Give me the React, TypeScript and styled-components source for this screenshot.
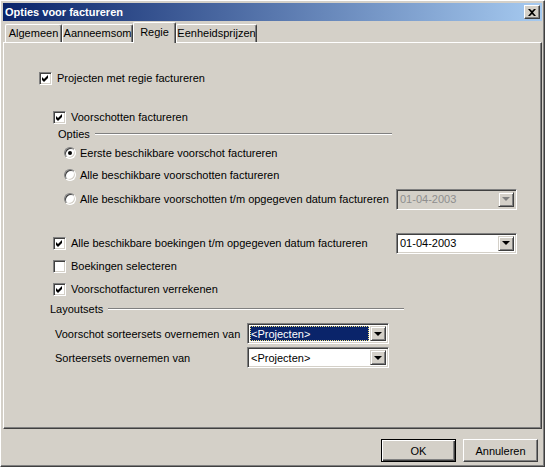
import styled, { createGlobalStyle } from 'styled-components';

const FACE = '#d4d0c8';
const SHADOW = '#808080';
const DARK = '#404040';

const GlobalStyle = createGlobalStyle`
  html, body {
    margin: 0;
    padding: 0;
    background: ${FACE};
  }
  body {
    font-family: Tahoma, "Liberation Sans", Arial, sans-serif;
    font-size: 11px;
    color: #000;
  }
`;

const Dialog = styled.div`
  box-sizing: border-box;
  width: 545px;
  height: 467px;
  display: flex;
  flex-direction: column;
  padding: 2px;
  background: ${FACE};
  border-left: 1px solid #fff;
  border-top: 1px solid #fff;
  border-right: 1px solid ${DARK};
  border-bottom: 1px solid ${DARK};
  box-shadow: inset -1px -1px ${SHADOW};
`;

const TitleBar = styled.div`
  height: 18px;
  flex: none;
  display: flex;
  align-items: center;
  justify-content: space-between;
  padding: 0 2px 0 2px;
  background: linear-gradient(to right, #0a246a, #a6caf0);
`;

const Title = styled.span`
  color: #fff;
  font-weight: bold;
  font-size: 11px;
  white-space: nowrap;
`;

const CloseButton = styled.div`
  box-sizing: border-box;
  width: 16px;
  height: 14px;
  display: flex;
  align-items: center;
  justify-content: center;
  background: ${FACE};
  border-left: 1px solid #fff;
  border-top: 1px solid #fff;
  border-right: 1px solid ${DARK};
  border-bottom: 1px solid ${DARK};
  box-shadow: inset -1px -1px ${SHADOW};
`;

const TabStrip = styled.div`
  height: 21px;
  flex: none;
  display: flex;
  align-items: flex-end;
  padding-left: 2px;
`;

const Tab = styled.div<{ $width: number; $active?: boolean }>`
  position: relative;
  z-index: ${(p) => (p.$active ? 2 : 1)};
  box-sizing: border-box;
  width: ${(p) => p.$width}px;
  height: ${(p) => (p.$active ? 21 : 18)}px;
  margin-bottom: ${(p) => (p.$active ? -1 : 0)}px;
  padding-top: ${(p) => (p.$active ? 3 : 2)}px;
  text-align: center;
  white-space: nowrap;
  background: ${FACE};
  border-left: 1px solid #fff;
  border-top: 1px solid #fff;
  border-right: 1px solid ${DARK};
  border-radius: 2px 2px 0 0;
  box-shadow: inset -1px 0 ${SHADOW};
`;

const Panel = styled.div`
  flex: 1;
  display: flex;
  flex-direction: column;
  padding-top: 25px;
  border-left: 1px solid #fff;
  border-top: 1px solid #fff;
  border-right: 1px solid ${DARK};
  border-bottom: 1px solid ${DARK};
  box-shadow: inset -1px -1px ${SHADOW};
`;

const Row = styled.div<{ $indent: number; $h?: number; $mt?: number }>`
  display: flex;
  align-items: center;
  height: ${(p) => p.$h ?? 20}px;
  margin-top: ${(p) => p.$mt ?? 0}px;
  padding-left: ${(p) => p.$indent}px;
  white-space: nowrap;
`;

const Option = styled.label<{ $width?: number; $gap?: number }>`
  display: flex;
  align-items: center;
  gap: ${(p) => p.$gap ?? 5}px;
  ${(p) => (p.$width ? `width: ${p.$width}px;` : '')}
  flex: none;
`;

const Box = styled.span`
  box-sizing: border-box;
  width: 13px;
  height: 13px;
  flex: none;
  display: flex;
  background: #fff;
  border-left: 1px solid ${SHADOW};
  border-top: 1px solid ${SHADOW};
  border-right: 1px solid #fff;
  border-bottom: 1px solid #fff;
  box-shadow: inset 1px 1px ${DARK}, inset -1px -1px ${FACE};
`;

const Radio = styled.span<{ $on?: boolean }>`
  box-sizing: border-box;
  position: relative;
  width: 12px;
  height: 12px;
  flex: none;
  border-radius: 50%;
  background: #fff;
  border: 1px solid;
  border-color: ${SHADOW} #fff #fff ${SHADOW};
  box-shadow: inset 1px 1px ${DARK}, inset -1px -1px ${FACE};

  &::after {
    content: '';
    display: ${(p) => (p.$on ? 'block' : 'none')};
    position: absolute;
    left: 3px;
    top: 3px;
    width: 4px;
    height: 4px;
    border-radius: 50%;
    background: #000;
  }
`;

const Group = styled.div<{ $width: number }>`
  display: flex;
  align-items: center;
  width: ${(p) => p.$width}px;
`;

const Rule = styled.div`
  flex: 1;
  height: 0;
  margin-left: 5px;
  border-top: 1px solid ${SHADOW};
  border-bottom: 1px solid #fff;
`;

const Label = styled.span<{ $width?: number }>`
  ${(p) => (p.$width ? `width: ${p.$width}px;` : '')}
  flex: none;
`;

const Combo = styled.div<{ $width: number; $disabled?: boolean }>`
  box-sizing: border-box;
  width: ${(p) => p.$width}px;
  height: 21px;
  flex: none;
  display: flex;
  align-items: stretch;
  padding: 2px;
  background: ${(p) => (p.$disabled ? FACE : '#fff')};
  color: ${(p) => (p.$disabled ? '#8e8e8e' : '#000')};
  border-left: 1px solid ${SHADOW};
  border-top: 1px solid ${SHADOW};
  border-right: 1px solid #fff;
  border-bottom: 1px solid #fff;
  box-shadow: inset 1px 1px ${DARK}, inset -1px -1px ${FACE};
`;

const Field = styled.div<{ $selected?: boolean }>`
  flex: 1;
  display: flex;
  align-items: center;
  padding-left: 1px;
  margin-right: 1px;
  background: ${(p) => (p.$selected ? '#0a246a' : 'transparent')};
  color: ${(p) => (p.$selected ? '#fff' : 'inherit')};
  outline: ${(p) => (p.$selected ? '1px dotted #f0e080' : 'none')};
  outline-offset: -1px;
`;

const DropButton = styled.div<{ $disabled?: boolean }>`
  box-sizing: border-box;
  width: 16px;
  flex: none;
  display: flex;
  align-items: center;
  justify-content: center;
  background: ${FACE};
  border-left: 1px solid ${FACE};
  border-top: 1px solid ${FACE};
  border-right: 1px solid ${DARK};
  border-bottom: 1px solid ${DARK};
  box-shadow: inset 1px 1px #fff, inset -1px -1px ${SHADOW};

  &::after {
    content: '';
    width: 0;
    height: 0;
    border-left: 4px solid transparent;
    border-right: 4px solid transparent;
    border-top: 4px solid ${(p) => (p.$disabled ? SHADOW : '#000')};
  }
`;

const Footer = styled.div`
  height: 35px;
  flex: none;
  display: flex;
  justify-content: flex-end;
  align-items: flex-start;
  gap: 7px;
  padding: 10px 4px 0 0;
  box-sizing: border-box;
`;

const Button = styled.button<{ $default?: boolean }>`
  box-sizing: border-box;
  width: 75px;
  height: 23px;
  padding: 0;
  font: inherit;
  color: #000;
  background: ${FACE};
  border: 1px solid ${(p) => (p.$default ? '#000' : 'transparent')};
  border-color: ${(p) => (p.$default ? '#000' : `#fff ${DARK} ${DARK} #fff`)};
  box-shadow: ${(p) =>
    p.$default
      ? `inset 1px 1px #fff, inset -1px -1px ${DARK}, inset -2px -2px ${SHADOW}`
      : `inset -1px -1px ${SHADOW}`};
`;

const Check = ({ on }: { on?: boolean }) => (
  <Box>
    {on && (
      <svg width="11" height="11" viewBox="0 0 11 11">
        <path d="M2 4 L4 6 L8 2 L8 5 L4 9 L2 7 Z" fill="#000" />
      </svg>
    )}
  </Box>
);

const Combobox = ({
  value,
  width,
  disabled,
  selected,
}: {
  value: string;
  width: number;
  disabled?: boolean;
  selected?: boolean;
}) => (
  <Combo $width={width} $disabled={disabled}>
    <Field $selected={selected}>{value}</Field>
    <DropButton $disabled={disabled} />
  </Combo>
);

export default function App() {
  return (
    <>
      <GlobalStyle />
      <Dialog>
        <TitleBar>
          <Title>Opties voor factureren</Title>
          <CloseButton>
            <svg width="8" height="7" viewBox="0 0 8 7">
              <path d="M0 0 H2 L4 2 L6 0 H8 L5 3.5 L8 7 H6 L4 5 L2 7 H0 L3 3.5 Z" fill="#000" />
            </svg>
          </CloseButton>
        </TitleBar>

        <TabStrip>
          <Tab $width={57}>Algemeen</Tab>
          <Tab $width={71}>Aanneemsom</Tab>
          <Tab $width={43} $active>Regie</Tab>
          <Tab $width={81}>Eenheidsprijzen</Tab>
        </TabStrip>

        <Panel>
          <Row $indent={35}>
            <Option>
              <Check on />
              Projecten met regie factureren
            </Option>
          </Row>

          <Row $indent={49} $mt={19}>
            <Option>
              <Check on />
              Voorschotten factureren
            </Option>
          </Row>

          <Row $indent={54} $h={14}>
            <Group $width={334}>
              <Label>Opties</Label>
              <Rule />
            </Group>
          </Row>

          <Row $indent={60} $mt={2}>
            <Option $gap={4}>
              <Radio $on />
              Eerste beschikbare voorschot factureren
            </Option>
          </Row>
          <Row $indent={60} $mt={2}>
            <Option $gap={4}>
              <Radio />
              Alle beschikbare voorschotten factureren
            </Option>
          </Row>
          <Row $indent={60} $h={22} $mt={3}>
            <Option $gap={4} $width={332}>
              <Radio />
              Alle beschikbare voorschotten t/m opgegeven datum factureren
            </Option>
            <Combobox value="01-04-2003" width={121} disabled />
          </Row>

          <Row $indent={49} $h={22} $mt={22}>
            <Option $width={343}>
              <Check on />
              Alle beschikbare boekingen t/m opgegeven datum factureren
            </Option>
            <Combobox value="01-04-2003" width={121} />
          </Row>
          <Row $indent={49} $mt={2}>
            <Option>
              <Check />
              Boekingen selecteren
            </Option>
          </Row>
          <Row $indent={49} $mt={3}>
            <Option>
              <Check on />
              Voorschotfacturen verrekenen
            </Option>
          </Row>

          <Row $indent={46} $h={14} $mt={3}>
            <Group $width={354}>
              <Label>Layoutsets</Label>
              <Rule />
            </Group>
          </Row>

          <Row $indent={51} $h={21} $mt={7}>
            <Label $width={192}>Voorschot sorteersets overnemen van</Label>
            <Combobox value="<Projecten>" width={142} selected />
          </Row>
          <Row $indent={51} $h={21} $mt={3}>
            <Label $width={192}>Sorteersets overnemen van</Label>
            <Combobox value="<Projecten>" width={142} />
          </Row>
        </Panel>

        <Footer>
          <Button $default>OK</Button>
          <Button>Annuleren</Button>
        </Footer>
      </Dialog>
    </>
  );
}
